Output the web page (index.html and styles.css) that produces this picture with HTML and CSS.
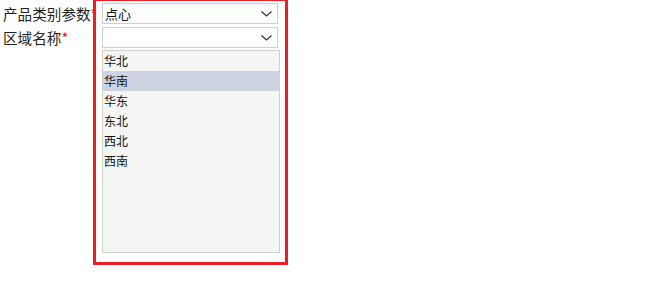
FILE: index.html
```html
<!DOCTYPE html>
<html lang="zh-CN">
<head>
<meta charset="utf-8">
<title>表单</title>
<link rel="stylesheet" href="styles.css">
</head>
<body>
<div class="page">
  <div class="form">
    <div class="row">
      <label class="label">产品类别参数<span class="req">*</span></label>
      <div class="select">
        <span class="value">点心</span>
        <svg class="chev" width="11" height="6" viewBox="0 0 11 6"><path d="M0.5 0.5 L5.5 5 L10.5 0.5" fill="none" stroke="#333" stroke-width="1.3"/></svg>
      </div>
    </div>
    <div class="row">
      <label class="label">区域名称<span class="req">*</span></label>
      <div class="select">
        <span class="value"></span>
        <svg class="chev" width="11" height="6" viewBox="0 0 11 6"><path d="M0.5 0.5 L5.5 5 L10.5 0.5" fill="none" stroke="#333" stroke-width="1.3"/></svg>
      </div>
    </div>
    <div class="row list-row">
      <div class="label"></div>
      <ul class="list">
        <li class="item">华北</li>
        <li class="item active">华南</li>
        <li class="item">华东</li>
        <li class="item">东北</li>
        <li class="item">西北</li>
        <li class="item">西南</li>
      </ul>
    </div>
  </div>
  <div class="frame"></div>
</div>
</body>
</html>
```

FILE: styles.css
```css
html, body {
  margin: 0;
  padding: 0;
  background: #fff;
}
body {
  font-family: "Noto Sans CJK SC", "Noto Sans", sans-serif;
  color: #222;
}
.page {
  position: relative;
  width: 650px;
  height: 289px;
  overflow: hidden;
}
.form {
  display: flex;
  flex-direction: column;
  padding: 3px 0 0 3px;
}
.row {
  display: flex;
  align-items: center;
  height: 21px;
  margin-bottom: 3px;
}
.row + .row.list-row {
  margin-top: -1px;
}
.label {
  width: 99px;
  flex: none;
  font-size: 14.6px;
  line-height: 21px;
  white-space: nowrap;
  color: #222;
}
.req {
  color: #e8161f;
}
.select {
  box-sizing: border-box;
  width: 176px;
  height: 21px;
  border: 1px solid #cfcfcf;
  background: #fff;
  display: flex;
  align-items: center;
  justify-content: space-between;
  padding: 0 5px 0 2px;
}
.value {
  font-size: 13px;
  line-height: 19px;
  color: #111;
}
.chev {
  display: block;
  margin-top: 1px;
}
.list-row {
  height: auto;
  align-items: flex-start;
}
.list {
  box-sizing: border-box;
  width: 178px;
  height: 203px;
  margin: 0;
  padding: 0;
  list-style: none;
  border: 1px solid #cfcfcc;
  background: #f5f5f3;
}
.item {
  height: 20px;
  line-height: 20px;
  font-size: 12px;
  padding-left: 1px;
  color: #111;
}
.item.active {
  background: #cdd3e0;
}
.frame {
  position: absolute;
  left: 93px;
  top: -2px;
  width: 189px;
  height: 261px;
  border: 3px solid #ee1c25;
  pointer-events: none;
}
```
